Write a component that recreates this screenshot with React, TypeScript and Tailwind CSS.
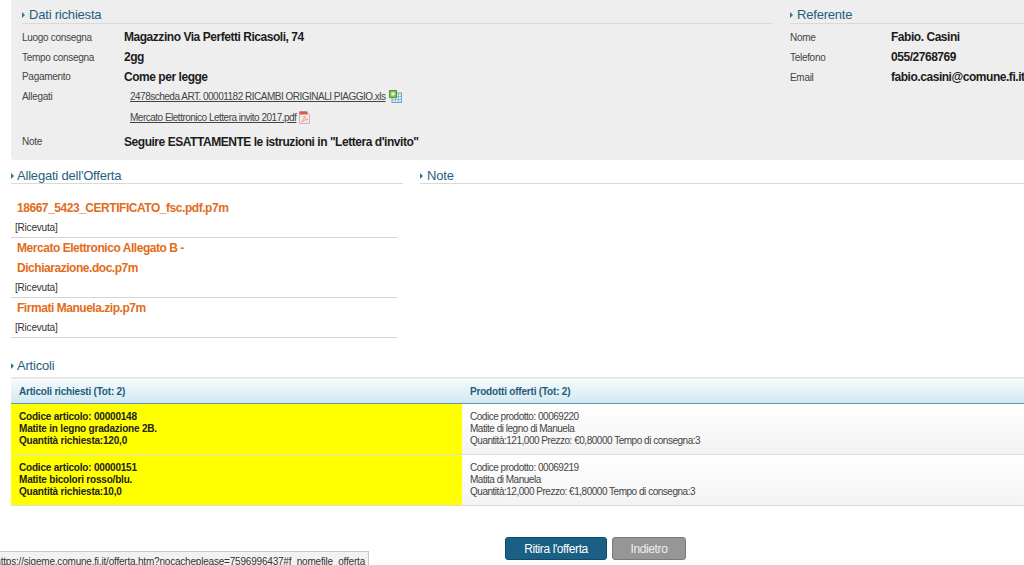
import React from "react";

function Heading({ children, className = "h-[19px] pt-[2px]", tight = false }: { children: React.ReactNode; className?: string; tight?: boolean }) {
  return (
    <div className={"flex items-center border-b border-[#d9d9d9] text-[13px] leading-[16px] tracking-[-0.2px] text-[#1f6080] " + className}>
      <span className={"h-0 w-0 border-y-[3px] border-l-[3px] border-y-transparent border-l-[#2a7a94] " + (tight ? "mr-[3px]" : "mr-[4px]")} />
      {children}
    </div>
  );
}

function Row({ label, w, h = "h-[20px]", children }: { label: string; w: string; h?: string; children: React.ReactNode }) {
  return (
    <div className={"flex items-center " + h}>
      <div className={"shrink-0 text-[10px] tracking-[-0.3px] text-[#444] " + w}>{label}</div>
      <div className="whitespace-nowrap text-[12px] font-bold tracking-[-0.46px] text-[#1c1c1c]">{children}</div>
    </div>
  );
}

function Attachment({ name, h, children }: { name: string; h: string; children: React.ReactNode }) {
  return (
    <div className={"flex items-center gap-[3px] pl-[6px] text-[10px] font-normal tracking-[-0.5px] text-[#444] " + h}>
      <span className="underline">{name}</span>
      {children}
    </div>
  );
}

function Excel() {
  return (
    <svg width="13" height="13" viewBox="0 0 13 13">
      <rect x="3" y="3" width="9.5" height="9.5" fill="#dcecf6" stroke="#6ba3c9" />
      <path d="M3 6.5h9M3 9.5h9M6.5 3v9M9.5 3v9" stroke="#6ba3c9" strokeWidth="0.6" />
      <rect x="0.5" y="0.5" width="7" height="7" fill="#8cc152" stroke="#4f9a2c" />
      <path d="M2.5 2.5h3v3h-3z" fill="#e8f5dc" />
    </svg>
  );
}

function Pdf() {
  return (
    <svg width="11" height="13" viewBox="0 0 11 13">
      <path d="M0.5 0.5h7l3 3v9h-10z" fill="#f3e6e4" stroke="#c9b8b6" />
      <rect x="0.5" y="0.5" width="8" height="3" fill="#e0564e" />
      <path d="M2.5 11c2-1 3-4 2.7-6 .6 2 1.6 3.4 3.6 3.6-2 0-4 .8-6.3 2.4z" fill="none" stroke="#e8908a" strokeWidth="0.7" />
    </svg>
  );
}

function FileRow({ lines }: { lines: string[] }) {
  return (
    <div className="border-b border-[#d4d4d4]">
      <div className="pl-[6px] text-[12px] font-bold tracking-[-0.46px] text-[#e36c1a]">
        {lines.map((l) => (
          <div key={l} className="flex h-[20px] items-center">{l}</div>
        ))}
      </div>
      <div className="flex h-[19px] items-center pl-[4px] text-[10px] tracking-[-0.2px] text-[#333]">[Ricevuta]</div>
    </div>
  );
}

function TableRow({ left, right }: { left: string[]; right: string[] }) {
  return (
    <div className="flex h-[51px] border-b border-[#dcdcdc]">
      <div className="flex w-[451px] shrink-0 flex-col justify-center bg-[#ffff00] pl-[8px] text-[10px] font-bold leading-[12px] tracking-[-0.2px] text-[#222]">
        {left.map((l) => (
          <div key={l}>{l}</div>
        ))}
      </div>
      <div className="flex flex-1 flex-col justify-center bg-gradient-to-b from-white to-[#f3f3f3] pl-[8px] text-[10px] leading-[12px] tracking-[-0.48px] text-[#444]">
        {right.map((l) => (
          <div key={l}>{l}</div>
        ))}
      </div>
    </div>
  );
}

export default function App() {
  return (
    <div className="relative h-[565px] w-[1024px] overflow-hidden bg-white font-['Liberation_Sans',Arial,sans-serif]">
      <div className="ml-[11px] flex h-[160px] rounded-bl-[3px] bg-[#eeeeee] pt-[5px] pl-[11px]">
        <div className="w-[751px] shrink-0">
          <Heading>Dati richiesta</Heading>
          <div className="pt-[3px]">
            <Row label="Luogo consegna" w="w-[102px]">Magazzino Via Perfetti Ricasoli, 74</Row>
            <Row label="Tempo consegna" w="w-[102px]">2gg</Row>
            <Row label="Pagamento" w="w-[102px]" h="h-[19px]">Come per legge</Row>
            <div className="flex">
              <div className="flex h-[20px] w-[102px] shrink-0 items-center text-[10px] tracking-[-0.3px] text-[#444]">Allegati</div>
              <div>
                <Attachment name="2478scheda ART. 00001182 RICAMBI ORIGINALI PIAGGIO.xls" h="h-[21px]"><Excel /></Attachment>
                <Attachment name="Mercato Elettronico Lettera invito 2017.pdf" h="h-[21px]"><Pdf /></Attachment>
              </div>
            </div>
            <Row label="Note" w="w-[102px]" h="h-[27px]">{'Seguire ESATTAMENTE le istruzioni in "Lettera d\'invito"'}</Row>
          </div>
        </div>
        <div className="ml-[17px] flex-1">
          <Heading>Referente</Heading>
          <div className="pt-[3px]">
            <Row label="Nome" w="w-[101px]">Fabio. Casini</Row>
            <Row label="Telefono" w="w-[101px]">055/2768769</Row>
            <Row label="Email" w="w-[101px]">fabio.casini@comune.fi.it</Row>
          </div>
        </div>
      </div>

      <div className="ml-[11px] flex pt-[6px]">
        <div className="w-[392px] shrink-0">
          <Heading className="h-[18px] pt-[2px]" tight>{"Allegati dell'Offerta"}</Heading>
          <div className="w-[386px] pt-[14px]">
            <FileRow lines={["18667_5423_CERTIFICATO_fsc.pdf.p7m"]} />
            <FileRow lines={["Mercato Elettronico Allegato B -", "Dichiarazione.doc.p7m"]} />
            <FileRow lines={["Firmati Manuela.zip.p7m"]} />
          </div>
        </div>
        <div className="ml-[17px] flex-1">
          <Heading className="h-[18px] pt-[2px]">Note</Heading>
        </div>
      </div>

      <div className="ml-[11px] mt-[20px]">
        <Heading className="h-[21px] border-b-2 border-[#e8e8e8] pb-[3px]" tight>Articoli</Heading>
        <div className="mt-px flex h-[24px] items-center border-b border-[#5f9bab] bg-gradient-to-b from-[#f4fafc] to-[#d3e8f2] text-[10px] font-bold tracking-[-0.2px] text-[#1f5b7a]">
          <div className="w-[451px] shrink-0 pl-[8px]">Articoli richiesti (Tot: 2)</div>
          <div className="pl-[8px]">Prodotti offerti (Tot: 2)</div>
        </div>
        <TableRow
          left={["Codice articolo: 00000148", "Matite in legno gradazione 2B.", "Quantità richiesta:120,0"]}
          right={["Codice prodotto: 00069220", "Matite di legno di Manuela", "Quantità:121,000 Prezzo: €0,80000 Tempo di consegna:3"]}
        />
        <TableRow
          left={["Codice articolo: 00000151", "Matite bicolori rosso/blu.", "Quantità richiesta:10,0"]}
          right={["Codice prodotto: 00069219", "Matita di Manuela", "Quantità:12,000 Prezzo: €1,80000 Tempo di consegna:3"]}
        />
      </div>

      <div className="ml-[505px] mt-[31px] flex gap-[5px]">
        <button className="h-[23px] w-[102px] rounded-[3px] border border-[#0f4a68] bg-[#1a6084] text-[12px] tracking-[-0.4px] text-white">{"Ritira l'offerta"}</button>
        <button className="h-[23px] w-[74px] rounded-[3px] border border-[#7a7a7a] bg-[#969696] text-[12px] tracking-[-0.4px] text-[#eee]">Indietro</button>
      </div>

      <div className="absolute bottom-0 left-0 flex h-[14px] w-[369px] justify-end overflow-hidden whitespace-nowrap border-t border-r border-[#c8c8c8] bg-[#f2f2f2] pr-[3px] text-[10px] leading-[19px] tracking-[-0.2px] text-[#333]">
        <span className="shrink-0">https://sigeme.comune.fi.it/offerta.htm?nocacheplease=7596996437#f_nomefile_offerta</span>
      </div>
    </div>
  );
}
